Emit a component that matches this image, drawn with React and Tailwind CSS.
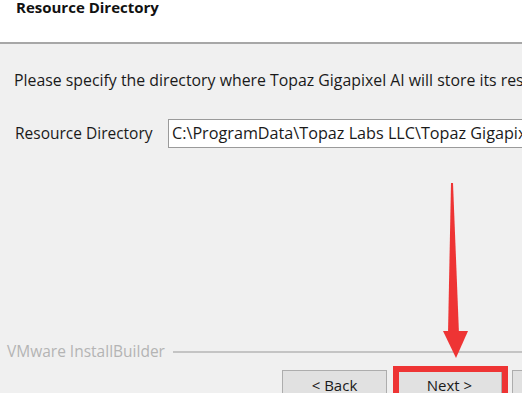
import React from 'react';

const font = { fontFamily: '"Open Sans", "Noto Sans", sans-serif' };

function WinButton({ children }) {
  return (
    <div className="w-[105px] h-[30px] shrink-0 bg-[#e1e1e1] border border-[#adadad] flex items-center justify-center text-[15px] text-[#1a1a1a]">
      {children}
    </div>
  );
}

export default function App() {
  return (
    <div
      className="relative w-[522px] h-[393px] overflow-hidden bg-[#f0f0f0] text-[#1a1a1a]"
      style={font}
    >
      {/* header */}
      <div className="h-[44px] bg-white border-b-2 border-[#a7a7a7] px-[16px]">
        <div className="text-[15px] font-bold leading-[14px] text-[#111]">
          Resource Directory
        </div>
      </div>

      {/* body */}
      <div className="px-[14px] pt-[26px]">
        <p className="text-[15.85px] leading-[20px] whitespace-nowrap">
          Please specify the directory where Topaz Gigapixel AI will store its resources.
        </p>
        <div className="flex items-center mt-[29px] pl-[1px]">
          <span className="text-[15.5px] whitespace-nowrap w-[153px] shrink-0">Resource Directory</span>
          <div className="h-[29px] flex-1 min-w-[360px] bg-white border border-[#9a9a9a] flex items-center pl-[3px] text-[16.2px] whitespace-nowrap overflow-hidden">
            C:\ProgramData\Topaz Labs LLC\Topaz Gigapixel AI
          </div>
        </div>
      </div>

      {/* footer divider */}
      <div className="absolute left-0 right-0 top-[340px] flex items-center pl-[7px]">
        <span className="text-[15.5px] text-[#b4b4b4] whitespace-nowrap">VMware InstallBuilder</span>
        <div className="flex-1 h-[2px] bg-[#c4c4c4] ml-[8px]" />
      </div>

      {/* buttons */}
      <div className="absolute top-[370px] left-[282px] flex gap-[10px]">
        <WinButton>&lt; Back</WinButton>
        <WinButton>Next &gt;</WinButton>
        <WinButton>Cancel</WinButton>
      </div>

      {/* annotation: red highlight around Next */}
      <div className="absolute left-[393px] top-[366px] w-[115px] h-[40px] border-[6px] border-[#ee3434]" />

      {/* annotation: red arrow */}
      <svg className="absolute inset-0" width="522" height="393" viewBox="0 0 522 393">
        <polygon points="451,183 453,183 459,334 448,334" fill="#ee3434" />
        <polygon points="443,331 468,331 456,358" fill="#ee3434" />
      </svg>
    </div>
  );
}
